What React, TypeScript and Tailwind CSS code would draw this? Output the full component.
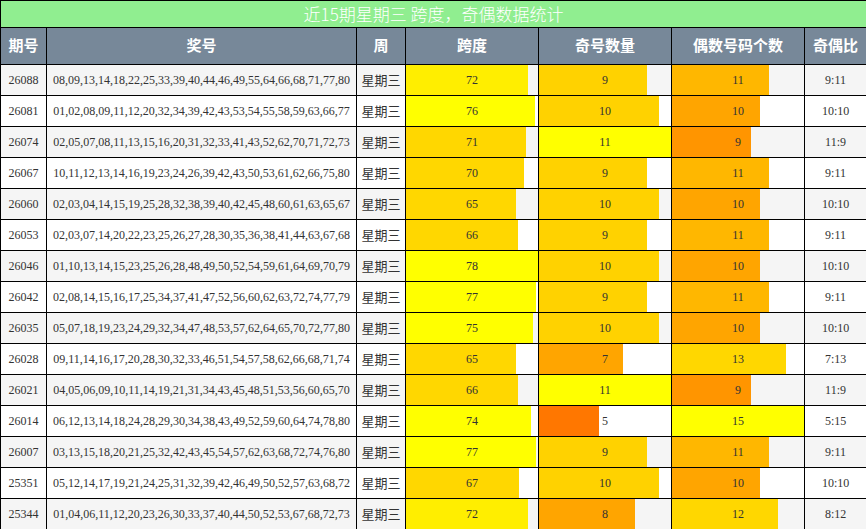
const rows: [string, string, number, number, number][] = [
  ['26088', '08,09,13,14,18,22,25,33,39,40,44,46,49,55,64,66,68,71,77,80', 72, 9, 11],
  ['26081', '01,02,08,09,11,12,20,32,34,39,42,43,53,54,55,58,59,63,66,77', 76, 10, 10],
  ['26074', '02,05,07,08,11,13,15,16,20,31,32,33,41,43,52,62,70,71,72,73', 71, 11, 9],
  ['26067', '10,11,12,13,14,16,19,23,24,26,39,42,43,50,53,61,62,66,75,80', 70, 9, 11],
  ['26060', '02,03,04,14,15,19,25,28,32,38,39,40,42,45,48,60,61,63,65,67', 65, 10, 10],
  ['26053', '02,03,07,14,20,22,23,25,26,27,28,30,35,36,38,41,44,63,67,68', 66, 9, 11],
  ['26046', '01,10,13,14,15,23,25,26,28,48,49,50,52,54,59,61,64,69,70,79', 78, 10, 10],
  ['26042', '02,08,14,15,16,17,25,34,37,41,47,52,56,60,62,63,72,74,77,79', 77, 9, 11],
  ['26035', '05,07,18,19,23,24,29,32,34,47,48,53,57,62,64,65,70,72,77,80', 75, 10, 10],
  ['26028', '09,11,14,16,17,20,28,30,32,33,46,51,54,57,58,62,66,68,71,74', 65, 7, 13],
  ['26021', '04,05,06,09,10,11,14,19,21,31,34,43,45,48,51,53,56,60,65,70', 66, 11, 9],
  ['26014', '06,12,13,14,18,24,28,29,30,34,38,43,49,52,59,60,64,74,78,80', 74, 5, 15],
  ['26007', '03,13,15,18,20,21,25,32,42,43,45,54,57,62,63,68,72,74,76,80', 77, 9, 11],
  ['25351', '05,12,14,17,19,21,24,25,31,32,39,42,46,49,50,52,57,63,68,72', 67, 10, 10],
  ['25344', '01,04,06,11,12,20,23,26,30,33,37,40,44,50,52,53,67,68,72,73', 72, 8, 12],
];

const spanColor = (v: number) => (v >= 73 ? '#ffff00' : v === 72 ? '#ffee00' : '#ffd700');
const oddColor = (v: number) =>
  v >= 11 ? '#ffff00' : v >= 9 ? '#ffd200' : v >= 7 ? '#ffa500' : '#ff7700';
const evenColor = (v: number) =>
  v >= 15 ? '#ffff00' : v >= 12 ? '#ffd700' : v === 11 ? '#ffb700' : v === 10 ? '#ffa500' : '#ff9500';

function Bar({ value, max, color }: { value: number; max: number; color: string }) {
  return (
    <td className="border border-black p-0 relative">
      <div className="absolute left-0 top-0 bottom-0" style={{ width: `${(value / max) * 100}%`, background: color }} />
      <span className="relative">{value}</span>
    </td>
  );
}

export default function App() {
  return (
    <div className="w-[866px] h-[529px] bg-white" style={{ fontFamily: '"Liberation Serif", "Noto Sans CJK SC", serif' }}>
      <table className="w-[866px] border-collapse text-center text-[12px] text-[#333] table-fixed">
        <colgroup>
          <col className="w-[46px]" />
          <col className="w-[310px]" />
          <col className="w-[49px]" />
          <col className="w-[133px]" />
          <col className="w-[133px]" />
          <col className="w-[133px]" />
          <col className="w-[62px]" />
        </colgroup>
        <thead>
          <tr className="h-[26px]">
            <th colSpan={7} className="border border-black bg-[#90ee90] text-white font-light text-[17px]" style={{ fontFamily: '"Noto Sans CJK SC", sans-serif' }}>
              近15期星期三 跨度，奇偶数据统计
            </th>
          </tr>
          <tr className="h-[37px] bg-[#778899] text-white text-[15px]" style={{ fontFamily: '"Noto Sans CJK SC", sans-serif' }}>
            {['期号', '奖号', '周', '跨度', '奇号数量', '偶数号码个数', '奇偶比'].map((h) => (
              <th key={h} className="border border-black font-bold">{h}</th>
            ))}
          </tr>
        </thead>
        <tbody>
          {rows.map(([id, nums, span, odd, even], i) => (
            <tr key={id} className={`h-[31px] ${i % 2 === 0 ? 'bg-[#f5f5f5]' : 'bg-white'}`}>
              <td className="border border-black">{id}</td>
              <td className="border border-black">{nums}</td>
              <td className="border border-black text-[13px]" style={{ fontFamily: '"Noto Sans CJK SC", sans-serif' }}>星期三</td>
              <Bar value={span} max={78} color={spanColor(span)} />
              <Bar value={odd} max={11} color={oddColor(odd)} />
              <Bar value={even} max={15} color={evenColor(even)} />
              <td className="border border-black">{odd}:{even}</td>
            </tr>
          ))}
        </tbody>
      </table>
    </div>
  );
}
